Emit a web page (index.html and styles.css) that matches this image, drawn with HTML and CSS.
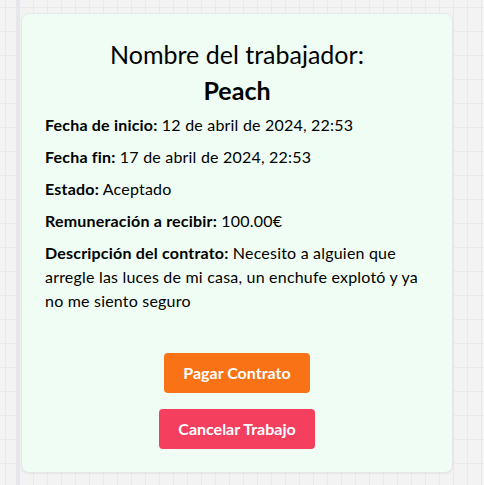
FILE: index.html
```html
<!DOCTYPE html>
<html lang="es">
<head>
<meta charset="utf-8">
<title>Contrato</title>
<link rel="stylesheet" href="styles.css">
</head>
<body>
<div class="layout">
  <div class="rail"></div>
  <main class="main">
    <section class="card">
      <h2 class="title">Nombre del trabajador:<br><span class="name">Peach</span></h2>
      <p class="row"><strong>Fecha de inicio:</strong> 12 de abril de 2024, 22:53</p>
      <p class="row"><strong>Fecha fin:</strong> 17 de abril de 2024, 22:53</p>
      <p class="row"><strong>Estado:</strong> Aceptado</p>
      <p class="row"><strong>Remuneración a recibir:</strong> 100.00€</p>
      <p class="row"><strong>Descripción del contrato:</strong> Necesito a alguien que arregle las luces de mi casa, un enchufe explotó y ya no me siento seguro</p>
      <div class="actions">
        <button class="btn btn-pay">Pagar Contrato</button>
        <button class="btn btn-cancel">Cancelar Trabajo</button>
      </div>
    </section>
  </main>
</div>
</body>
</html>
```

FILE: styles.css
```css
* { box-sizing: border-box; }
html, body { margin: 0; height: 100%; }
body {
  font-family: Lato, "Open Sans", sans-serif;
  color: #000;
  background-color: #f3f3f3;
  background-image:
    linear-gradient(to right, #e9e9e9 1px, transparent 1px),
    linear-gradient(to bottom, #e9e9e9 1px, transparent 1px);
  background-size: 14px 24px;
  background-position: 5px 7px;
  overflow: hidden;
}
.layout {
  display: flex;
  height: 100%;
  padding-left: 16px;
}
.rail {
  width: 4px;
  background: #e5e7eb;
  flex-shrink: 0;
}
.main {
  padding: 13px 0 0 1px;
}
.card {
  width: 432px;
  height: 460px;
  background: #f0fdf4;
  border: 1px solid #e5e7eb;
  border-radius: 8px;
  box-shadow: 0 1px 2px rgba(0,0,0,0.06);
  padding: 22px 23px 23px;
}
.title {
  margin: 0 0 5px;
  text-align: center;
  font-size: 25px;
  line-height: 36px;
  font-weight: 400;
}
.name { font-weight: 700; }
.row {
  margin: 0 0 8px;
  font-size: 16px;
  line-height: 24px;
  letter-spacing: 0.2px;
}
.row strong { font-weight: 700; }
.actions {
  margin-top: 40px;
  display: flex;
  flex-direction: column;
  align-items: center;
  gap: 16px;
}
.btn {
  font-family: inherit;
  font-size: 16px;
  font-weight: 700;
  line-height: 24px;
  color: #fff;
  border: 0;
  border-radius: 4px;
  padding: 8px 19px;
}
.btn-pay { background: #f97316; }
.btn-cancel { background: #f43f5e; }
```
